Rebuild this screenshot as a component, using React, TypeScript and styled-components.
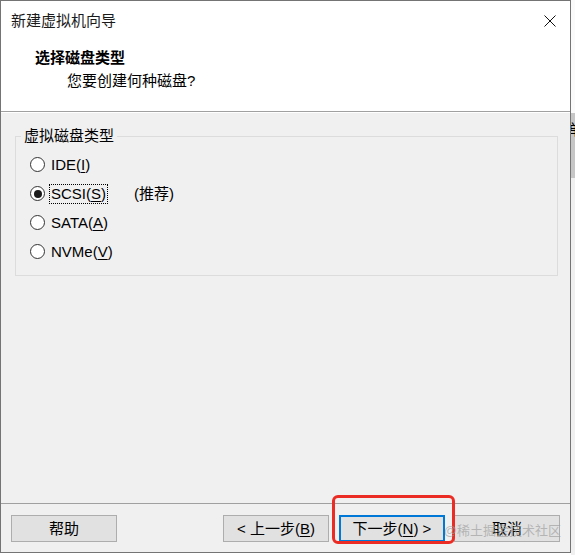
import React from "react";
import styled, { createGlobalStyle } from "styled-components";

const Global = createGlobalStyle`
  html, body { margin: 0; padding: 0; background: #ffffff; }
  body { font-family: "Liberation Sans", "Noto Sans CJK SC", sans-serif; color: #000; }
  * { box-sizing: border-box; }
`;

const FONT = `"Liberation Sans", "Noto Sans CJK SC", sans-serif`;

const Page = styled.div`
  display: flex;
  width: 575px;
  height: 555px;
  background: #ffffff;
  overflow: hidden;
`;

const Window = styled.div`
  flex: none;
  width: 571px;
  height: 553px;
  border: 1px solid #747474;
  background: #f0f0f0;
  display: flex;
  flex-direction: column;
  font-family: ${FONT};
  font-size: 15px;
`;

const TitleBar = styled.div`
  height: 39px;
  flex: none;
  background: #ffffff;
  display: flex;
  align-items: center;
  padding: 0 14px 0 10px;
`;

const Title = styled.div`
  font-size: 15px;
  line-height: 20px;
  color: #1a1a1a;
`;

const Close = styled.div`
  margin-left: auto;
  width: 12px;
  height: 12px;
  display: flex;
`;

const Header = styled.div`
  height: 72px;
  flex: none;
  background: #ffffff;
  border-bottom: 1px solid #a0a0a0;
  padding: 8px 0 0 34px;
`;

const HeaderTitle = styled.div`
  font-weight: bold;
  line-height: 20px;
`;

const HeaderSub = styled.div`
  line-height: 20px;
  margin-top: 3px;
  padding-left: 32px;
`;

const Body = styled.div`
  flex: 1;
  border-top: 1px solid #ffffff;
  padding: 13px 12px 0 14px;
`;

const Group = styled.fieldset`
  margin: 0;
  padding: 0;
  min-width: 0;
  border: 1px solid #dcdcdc;
`;

const Legend = styled.legend`
  padding: 0 3px;
  margin-left: 5px;
  line-height: 20px;
  font-size: 15px;
`;

const Options = styled.div`
  padding: 4px 0 9px 14px;
  display: flex;
  flex-direction: column;
`;

const OptionRow = styled.div`
  height: 29px;
  display: flex;
  align-items: center;
`;

const Radio = styled.span<{ $checked?: boolean }>`
  width: 15px;
  height: 15px;
  border-radius: 50%;
  border: 1px solid #333333;
  background: #ffffff;
  display: flex;
  align-items: center;
  justify-content: center;
  flex: none;
  &::after {
    content: "";
    width: 8px;
    height: 8px;
    border-radius: 50%;
    background: ${(p) => (p.$checked ? "#1b1b1b" : "transparent")};
  }
`;

const OptionLabel = styled.span<{ $focused?: boolean }>`
  margin-left: 4px;
  padding: 0 1px;
  line-height: 18px;
  border: 1px dotted ${(p) => (p.$focused ? "#000" : "transparent")};
`;

const Note = styled.span`
  margin-left: 26px;
  line-height: 18px;
`;

const Footer = styled.div`
  flex: none;
  height: 49px;
  border-top: 1px solid #a0a0a0;
  padding: 11px 10px 0 10px;
  display: flex;
  align-items: flex-start;
  position: relative;
`;

const Button = styled.div<{ $primary?: boolean; $gap?: number }>`
  width: 106px;
  height: 27px;
  margin-left: ${(p) => p.$gap ?? 0}px;
  border: ${(p) => (p.$primary ? "2px solid #0078d7" : "1px solid #adadad")};
  background: #e1e1e1;
  display: flex;
  align-items: center;
  justify-content: center;
  font-size: 15px;
  line-height: 18px;
  white-space: pre;
  flex: none;
`;

const Spacer = styled.div`
  flex: 1;
`;

const Highlight = styled.div`
  position: relative;
  margin-left: 10px;
  flex: none;
  &::after {
    content: "";
    position: absolute;
    top: -20px;
    left: -7px;
    right: -10px;
    bottom: -2px;
    border: 3px solid #ea2c24;
    border-radius: 6px;
    pointer-events: none;
  }
`;

const Watermark = styled.div`
  position: absolute;
  right: 9px;
  bottom: 13px;
  font-size: 13px;
  line-height: 16px;
  color: rgba(160, 160, 160, 0.7);
  font-family: ${FONT};
  pointer-events: none;
`;

const Side = styled.div`
  flex: 1;
  min-width: 0;
  overflow: hidden;
  display: flex;
  flex-direction: column;
  background: #ffffff;
`;

const SideTop = styled.div`
  height: 113px;
  background: #fafafa;
`;

const SideBar = styled.div`
  height: 65px;
  background: linear-gradient(to right, #f0f0f0 0 1px, #c6c6c6 1px);
  overflow: hidden;
  font-size: 15px;
  line-height: 16px;
  padding-top: 9px;
  margin-left: -3px;
  white-space: nowrap;
`;

const SideRest = styled.div`
  flex: 1;
  background: #f0f0f0;
`;

const Key = styled.u`
  text-decoration: underline;
  text-underline-offset: 2px;
`;

export default function App() {
  return (
    <>
      <Global />
      <Page>
        <Window>
          <TitleBar>
            <Title>新建虚拟机向导</Title>
            <Close>
              <svg width="12" height="12" viewBox="0 0 12 12">
                <path d="M0.5 0.5 L11.5 11.5 M11.5 0.5 L0.5 11.5" stroke="#111" strokeWidth="1" fill="none" />
              </svg>
            </Close>
          </TitleBar>
          <Header>
            <HeaderTitle>选择磁盘类型</HeaderTitle>
            <HeaderSub>您要创建何种磁盘?</HeaderSub>
          </Header>
          <Body>
            <Group>
              <Legend>虚拟磁盘类型</Legend>
              <Options>
                <OptionRow>
                  <Radio />
                  <OptionLabel>
                    IDE(<Key>I</Key>)
                  </OptionLabel>
                </OptionRow>
                <OptionRow>
                  <Radio $checked />
                  <OptionLabel $focused>
                    SCSI(<Key>S</Key>)
                  </OptionLabel>
                  <Note>(推荐)</Note>
                </OptionRow>
                <OptionRow>
                  <Radio />
                  <OptionLabel>
                    SATA(<Key>A</Key>)
                  </OptionLabel>
                </OptionRow>
                <OptionRow>
                  <Radio />
                  <OptionLabel>
                    NVMe(<Key>V</Key>)
                  </OptionLabel>
                </OptionRow>
              </Options>
            </Group>
          </Body>
          <Footer>
            <Button>帮助</Button>
            <Spacer />
            <Button>
              {"< 上一步("}
              <Key>B</Key>
              {")"}
            </Button>
            <Highlight>
              <Button $primary>
                {"下一步("}
                <Key>N</Key>
                {") >"}
              </Button>
            </Highlight>
            <Button $gap={9}>取消</Button>
            <Watermark>@稀土掘金技术社区</Watermark>
          </Footer>
        </Window>
        <Side>
          <SideTop />
          <SideBar>单</SideBar>
          <SideRest />
        </Side>
      </Page>
    </>
  );
}
